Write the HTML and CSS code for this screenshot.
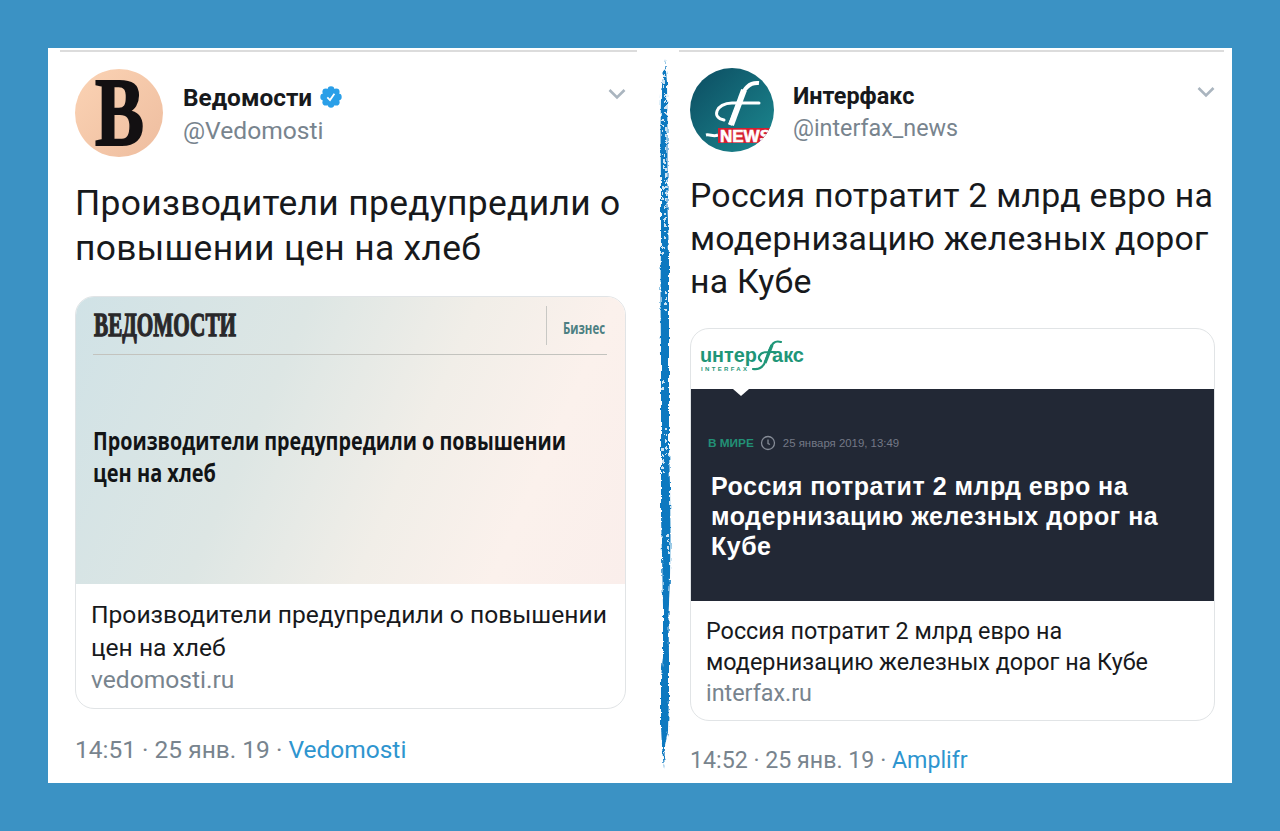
FILE: index.html
```html
<!DOCTYPE html>
<html lang="ru">
<head>
    <meta charset="UTF-8">
    <meta name="viewport" content="width=device-width, initial-scale=1.0">
    <title>Ведомости и Интерфакс</title>
    <link rel="stylesheet" href="styles.css">
</head>
<body>

    <main class="board">
        <article class="tweet tweet-left">
            <header class="author">
                <svg class="avatar" viewBox="0 0 88 88">
                    <defs>
                        <linearGradient id="peach" x1="0" y1="0" x2="1" y2="1">
                            <stop offset="0" stop-color="#fbd3b4"/>
                            <stop offset="1" stop-color="#eebd9f"/>
                        </linearGradient>
                    </defs>
                    <circle cx="44" cy="44" r="44" fill="url(#peach)"/>
                    <text class="avatar-letter" transform="translate(20 76) scale(1 1.35)" textLength="49" lengthAdjust="spacingAndGlyphs">B</text>
                </svg>
                <div class="who">
                    <div class="name">Ведомости
                        <svg class="badge" viewBox="0 0 22 22">
                            <g fill="#2a9fe8">
                                <circle cx="11" cy="11" r="8.5"/>
                                <circle cx="11" cy="3.7" r="3.4"/>
                                <circle cx="16.2" cy="5.8" r="3.4"/>
                                <circle cx="18.3" cy="11" r="3.4"/>
                                <circle cx="16.2" cy="16.2" r="3.4"/>
                                <circle cx="11" cy="18.3" r="3.4"/>
                                <circle cx="5.8" cy="16.2" r="3.4"/>
                                <circle cx="3.7" cy="11" r="3.4"/>
                                <circle cx="5.8" cy="5.8" r="3.4"/>
                            </g>
                            <path d="M7.3 11.4l2.7 2.7 4.4-6.3" fill="none" stroke="#fff" stroke-width="1.8"/>
                        </svg>
                    </div>
                    <div class="handle">@Vedomosti</div>
                </div>
                <svg class="chevron" viewBox="0 0 18 12"><path d="M1.5 2l7.5 7.5L16.5 2" fill="none" stroke="#aab5bf" stroke-width="2.6"/></svg>
            </header>

            <p class="text">Производители предупредили о<br>повышении цен на хлеб</p>

            <div class="card">
                <div class="picture vedomosti">
                    <div class="picture-top">
                        <svg class="vedomosti-logo" viewBox="0 0 146 38">
                            <text transform="translate(1 27) scale(1 1.33)" textLength="142" lengthAdjust="spacingAndGlyphs">ВЕДОМОСТИ</text>
                        </svg>
                        <div class="section">
                            <svg viewBox="0 0 46 28">
                                <text x="1" y="20" textLength="43" lengthAdjust="spacingAndGlyphs">Бизнес</text>
                            </svg>
                        </div>
                    </div>
                    <svg class="headline" viewBox="0 0 480 66">
                        <text x="0" y="24" textLength="473" lengthAdjust="spacingAndGlyphs">Производители предупредили о повышении</text>
                        <text x="0" y="56" textLength="123" lengthAdjust="spacingAndGlyphs">цен на хлеб</text>
                    </svg>
                </div>
                <div class="caption">
                    <div>Производители предупредили о повышении<br>цен на хлеб</div>
                    <div class="domain">vedomosti.ru</div>
                </div>
            </div>

            <footer class="meta">14:51 · 25 янв. 19 · <a>Vedomosti</a></footer>
        </article>

        <svg class="brush" viewBox="0 0 24 720">
            <defs>
                <filter id="rough" x="-50%" y="-2%" width="200%" height="104%">
                    <feTurbulence type="fractalNoise" baseFrequency="0.4 0.2" numOctaves="3" seed="4" result="noise"/>
                    <feDisplacementMap in="SourceGraphic" in2="noise" scale="4" xChannelSelector="R" yChannelSelector="G"/>
                </filter>
            </defs>
            <g filter="url(#rough)">
                <path d="M12 3L10 22 8 36 7.5 80 8 130 8 180 7.5 240 8 300 8 400 8 460 9 500 10 550 10 600 8 622 8 670 9 690 11 714 12 690 15 675 16 640 16 600 15.5 560 17 520 17.5 480 17 430 16 390 16 300 16 200 14.5 150 14.5 90 14 26Z" fill="#0f79c0"/>
                <path d="M11 12v20M12 38v20M10 62v14M13 72v24M11 98v18M13 112v34M10 130v14M12 150v32M10 190v8M13 235v20M10 325v12M13 372v30M10 392v26M15 478v20M12 694v14" stroke="#fff" stroke-width="1.6" stroke-dasharray="3 3"/>
            </g>
        </svg>

        <article class="tweet tweet-right">
            <header class="author">
                <svg class="avatar" viewBox="0 0 84 84">
                    <defs>
                        <linearGradient id="teal" x1="0" y1="0" x2="1" y2="1">
                            <stop offset="0" stop-color="#0c4c61"/>
                            <stop offset="1" stop-color="#1c8990"/>
                        </linearGradient>
                        <clipPath id="disc"><circle cx="42" cy="42" r="42"/></clipPath>
                    </defs>
                    <g clip-path="url(#disc)">
                        <rect width="84" height="84" fill="url(#teal)"/>
                        <path d="M69 15c-10-1-15 5-18 15L40 57" fill="none" stroke="#fff" stroke-width="4"/>
                        <path d="M54 22L41 57" stroke="#fff" stroke-width="6"/>
                        <path d="M69 35H42c-16 0-21 15-8 17" fill="none" stroke="#fff" stroke-width="3" stroke-linecap="round"/>
                        <path d="M16 67c4-1 7 2 12 0" fill="none" stroke="#fff" stroke-width="3"/>
                        <path d="M28 60h56v15H28z" fill="#d51f30"/>
                        <text class="news" x="30" y="74" textLength="51" lengthAdjust="spacingAndGlyphs">NEWS</text>
                    </g>
                </svg>
                <div class="who">
                    <div class="name">Интерфакс</div>
                    <div class="handle">@interfax_news</div>
                </div>
                <svg class="chevron" viewBox="0 0 18 12"><path d="M1.5 2l7.5 7.5L16.5 2" fill="none" stroke="#aab5bf" stroke-width="2.6"/></svg>
            </header>

            <p class="text">Россия потратит 2 млрд евро на<br>модернизацию железных дорог<br>на Кубе</p>

            <div class="card">
                <div class="picture interfax">
                    <div class="interfax-bar">
                        <svg class="interfax-logo" viewBox="0 0 110 36">
                            <text class="logo-word" x="1" y="24" textLength="57" lengthAdjust="spacingAndGlyphs">uнтер</text>
                            <text class="logo-word" x="73" y="24" textLength="32" lengthAdjust="spacingAndGlyphs">акс</text>
                            <text class="logo-sub" x="2" y="33" textLength="46">INTERFAX</text>
                            <path d="M82 4c-7-2-9 2-12 9l-3 9c-2 6-6 10-13 9M76 14h-7c-9 0-11 6-7 9" fill="none" stroke="#1f9678" stroke-width="2.2" stroke-linecap="round"/>
                            <path d="M73 7l-7 18" stroke="#1f9678" stroke-width="3.2"/>
                        </svg>
                    </div>
                    <div class="interfax-body">
                        <div class="rubric">
                            <b>В МИРЕ</b>
                            <svg class="clock" viewBox="0 0 16 16"><circle cx="8" cy="8" r="6.5"/><path d="M8 4.5V8.5l2 1"/></svg>
                            <span>25 января 2019, 13:49</span>
                        </div>
                        <div class="interfax-title">Россия потратит 2 млрд евро на<br>модернизацию железных дорог на<br>Кубе</div>
                    </div>
                </div>
                <div class="caption">
                    <div>Россия потратит 2 млрд евро на<br>модернизацию железных дорог на Кубе</div>
                    <div class="domain">interfax.ru</div>
                </div>
            </div>

            <footer class="meta">14:52 · 25 янв. 19 · <a>Amplifr</a></footer>
        </article>
    </main>

</body>
</html>
```
FILE: styles.css
```css
* {
    box-sizing: border-box;
}
body {
    margin: 0;
    padding-top: 48px;
    height: 831px;
    overflow: hidden;
    background-color: #3b92c4;
    font-family: Roboto, "Liberation Sans", sans-serif;
    color: #17191c;
}
svg {
    display: block;
    overflow: visible;
}
.board {
    display: flex;
    width: 1184px;
    height: 735px;
    margin: 0 auto;
    padding: 2px 8px 0 12px;
    background: #fff;
}
.tweet {
    flex-shrink: 0;
    border-top: 2px solid #dcdcdc;
}
.tweet-left {
    width: 577px;
    padding: 17px 11px 0 15px;
}
.tweet-right {
    width: 545px;
    padding: 16px 9px 0 11px;
}
.brush {
    width: 24px;
    height: 720px;
    margin: 6px 2px 0 16px;
}
.author {
    display: flex;
}
.avatar {
    width: 88px;
    height: 88px;
}
.who {
    flex: 1;
    padding: 11px 0 0 20px;
}
.name {
    display: flex;
    align-items: center;
    gap: 8px;
    height: 34px;
    font-size: 24.4px;
    font-weight: bold;
}
.badge {
    width: 22px;
    height: 22px;
}
.handle {
    font-size: 24.6px;
    line-height: 33px;
    color: #78848e;
}
.chevron {
    width: 18px;
    height: 12px;
    margin: 19px 0 0;
}
.text {
    margin: 24px 0 0;
    font-size: 35.4px;
    line-height: 45px;
    letter-spacing: 0.32px;
}
.card {
    margin-top: 25px;
    border: 1px solid #e1e4e6;
    border-radius: 19px;
    overflow: hidden;
}
.caption {
    padding: 15px 15px 0;
    font-size: 24.6px;
    line-height: 32.5px;
}
.domain, .meta {
    color: #78848e;
}
.meta {
    margin-top: 25px;
    font-size: 24.5px;
    line-height: 32px;
}
.meta a {
    color: #2e95cf;
}
.tweet-left .card {
    height: 413px;
}
.avatar-letter {
    font: bold 72px "Liberation Serif", serif;
    fill: #131012;
    stroke: #131012;
    stroke-width: 1.5px;
}
.vedomosti {
    height: 287px;
    padding: 9px 18px 0 17px;
    background: linear-gradient(114deg, #d0e2e6 0%, #dde6e4 35%, #f1eee8 60%, #fbf1ec 80%, #faeeeb 100%);
}
.picture-top {
    display: flex;
    justify-content: space-between;
    height: 49px;
    border-bottom: 1px solid #c3c3be;
}
.vedomosti-logo {
    width: 146px;
    height: 38px;
    margin-top: 3px;
    font: bold 25px "Liberation Serif", serif;
    fill: #29282a;
    stroke: #29282a;
    stroke-width: 1px;
}
.section {
    width: 61px;
    height: 39px;
    padding: 8px 0 0 15px;
    border-left: 1px solid #c8c8c4;
    font: bold 17px "Open Sans", sans-serif;
    fill: #4c7f82;
}
.headline {
    width: 480px;
    height: 66px;
    margin-top: 71px;
    font: bold 25px "Open Sans", sans-serif;
    fill: #121416;
}
.tweet-right .avatar {
    width: 84px;
    height: 84px;
}
.news {
    font: bold 17px "Liberation Sans", sans-serif;
    fill: #fff;
    stroke: #fff;
    stroke-width: 0.6px;
}
.tweet-right .who {
    padding: 12px 0 0 19px;
}
.tweet-right .name {
    height: 32px;
    font-size: 23.4px;
}
.tweet-right .handle {
    font-size: 23.3px;
    line-height: 32px;
}
.tweet-right .chevron {
    margin-top: 18px;
}
.tweet-right .text {
    margin-top: 22px;
    font-size: 33.8px;
    line-height: 43px;
    letter-spacing: 0.25px;
}
.tweet-right .card {
    height: 393px;
}
.interfax-bar {
    height: 60px;
    padding: 9px 0 0 8px;
}
.interfax-logo {
    width: 110px;
    height: 36px;
    fill: #1f9678;
}
.logo-word {
    font: bold 21px "Liberation Sans", sans-serif;
}
.logo-sub {
    font: bold 6px "Liberation Sans", sans-serif;
}
.interfax-body {
    display: flow-root;
    height: 212px;
    padding-left: 17px;
    background: #222835;
}
.interfax-body::before {
    content: "";
    display: block;
    width: 16px;
    height: 7px;
    margin: 0 0 37px 25px;
    background: #fff;
    clip-path: polygon(0 0, 100% 0, 50% 100%);
}
.rubric {
    display: flex;
    align-items: center;
    gap: 6.5px;
    height: 20px;
    font-family: "Liberation Sans", sans-serif;
    font-size: 11.4px;
    color: #747986;
}
.rubric b {
    font-size: 11.8px;
    color: #229076;
}
.clock {
    width: 16px;
    height: 16px;
    fill: none;
    stroke: #858b96;
    stroke-width: 1.3px;
}
.interfax-title {
    margin: 18px 0 0 3px;
    font: bold 25px/30px "Liberation Sans", sans-serif;
    letter-spacing: 0.5px;
    color: #fff;
}
.tweet-right .caption {
    padding: 15px 15px 0;
    font-size: 23.35px;
    line-height: 31px;
}
.tweet-right .meta {
    margin-top: 24px;
    font-size: 23.2px;
    line-height: 30px;
}
```
